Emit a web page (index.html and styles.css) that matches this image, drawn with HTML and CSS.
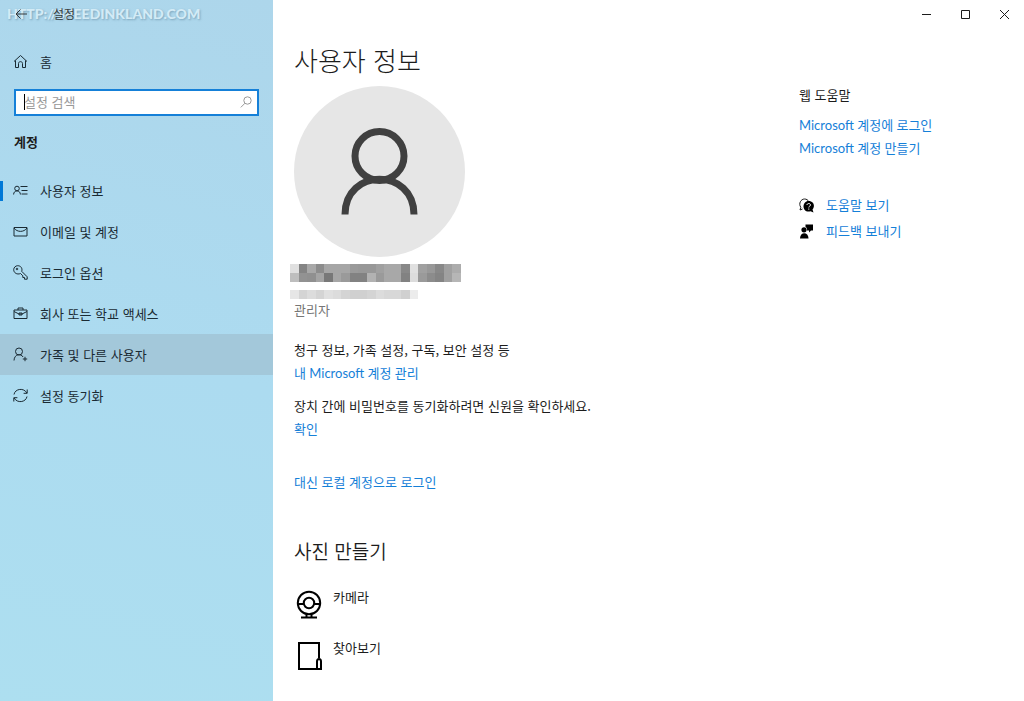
FILE: index.html
```
<!DOCTYPE html>
<html lang="ko">
<head>
  <meta charset="UTF-8">
  <title>설정</title>
  <link rel="stylesheet" href="styles.css">
</head>
<body>
  <aside class="sidebar">
    <header class="titlebar">
      <div class="watermark">HTTP://SPEEDINKLAND.COM</div>
      <button class="back" type="button" aria-label="뒤로">
        <svg width="12" height="12" viewBox="0 0 12 12"><path d="M12 6H1M5.500 1.500L1 6l4.500 4.500"/></svg>
      </button>
      <span class="app-name">설정</span>
    </header>
    <a class="nav-item home" href="#">
      <svg width="15" height="15" viewBox="0 0 15 15"><path d="M1 7.500L7.500 1.500 14 7.500M2.500 6.500v7h3V9.500c0-2.500 4-2.500 4 0v4h3v-7"/></svg>
      홈
    </a>
    <form class="search">
      <input type="text" id="search" placeholder="설정 검색" aria-label="설정 검색">
      <span class="caret"></span>
      <svg width="12" height="12" viewBox="0 0 12 12"><circle cx="7.500" cy="4.500" r="3.700"/><path d="M5 7.200L.8 11.400"/></svg>
    </form>
    <h2>계정</h2>
    <nav>
      <a class="nav-item current" href="#">
        <svg width="15" height="15" viewBox="0 0 15 15"><circle cx="4" cy="5.500" r="2.300"/><path d="M.6 11.500c0-4.800 6.800-4.800 6.800 0M7.500 3.500h7M8.500 7.500h6M8.500 11h6"/></svg>
        사용자 정보
      </a>
      <a class="nav-item" href="#">
        <svg width="15" height="15" viewBox="0 0 15 15"><path d="M1 3.500h13v8.500H1zM1 4c3 4.500 10 4.500 13 0"/></svg>
        이메일 및 계정
      </a>
      <a class="nav-item" href="#">
        <svg width="15" height="15" viewBox="0 0 15 15"><path d="M8.700 6.300l5.500 5.500v2.400h-2.700v-1.700H9.800v-1.700L7.500 8.500C4 10 .7 7.800.7 4.700.7 2.500 2.500.7 4.700.7c3.100 0 5 2.600 4 5.600z"/><circle cx="4" cy="4" r=".8"/></svg>
        로그인 옵션
      </a>
      <a class="nav-item" href="#">
        <svg width="15" height="15" viewBox="0 0 15 15"><path d="M1 4h13v8.500H1zM5 4V2h5v2M1 5.500l5 2.500h3l5-2.500M6 7h3v2H6z"/></svg>
        회사 또는 학교 액세스
      </a>
      <a class="nav-item hover" href="#">
        <svg width="15" height="15" viewBox="0 0 15 15"><circle cx="6" cy="4.500" r="3.500"/><path d="M1 13.500C1.300 6.500 8.500 6.500 10 10M12 9.800v4.400M9.800 12h4.400"/></svg>
        가족 및 다른 사용자
      </a>
      <a class="nav-item" href="#">
        <svg width="15" height="15" viewBox="0 0 15 15"><path d="M1 6.500C2 .5 11 -.5 13.800 5M14.200 1.500V5.300h-3.600M14 8.500c-1 6-10 7-12.800 1.500M.8 13.500V9.700h3.600"/></svg>
        설정 동기화
      </a>
    </nav>
  </aside>

  <main class="content">
    <div class="window-buttons">
      <button type="button" aria-label="최소화"><svg width="11" height="11" viewBox="0 0 11 11"><path d="M1 5.500h9"/></svg></button>
      <button type="button" aria-label="최대화"><svg width="11" height="11" viewBox="0 0 11 11"><path d="M1.500 1.500h8v8h-8z"/></svg></button>
      <button type="button" aria-label="닫기"><svg width="11" height="11" viewBox="0 0 11 11"><path d="M1 1l9 9M10 1l-9 9"/></svg></button>
    </div>
    <div class="columns">
      <section class="info">
        <h1>사용자 정보</h1>
        <svg class="avatar" width="171" height="171" viewBox="0 0 171 171">
          <circle class="disc" cx="85.500" cy="85.500" r="85.500"/>
          <circle cx="85.500" cy="70" r="24.500"/>
          <path d="M51 128.500c0-47 69-47 69 0"/>
        </svg>
        <div class="mosaic" id="name"></div>
        <div class="mosaic mail" id="mail"></div>
        <p class="role">관리자</p>
        <div class="block">
          <p>청구 정보, 가족 설정, 구독, 보안 설정 등</p>
          <a class="ms-link" href="#">내 Microsoft 계정 관리</a>
        </div>
        <div class="block">
          <p>장치 간에 비밀번호를 동기화하려면 신원을 확인하세요.</p>
          <a href="#">확인</a>
        </div>
        <a class="local" href="#">대신 로컬 계정으로 로그인</a>
        <h3>사진 만들기</h3>
        <button class="source" type="button">
          <svg width="30" height="30" viewBox="0 0 30 30"><circle cx="15" cy="13" r="11.200"/><circle cx="15" cy="13" r="5.200"/><path d="M4 14h5.800M20.200 14H26M12.500 24v3.500M17.500 24v3.500M7 27.500h16"/></svg>
          카메라
        </button>
        <button class="source" type="button">
          <svg width="30" height="30" viewBox="0 0 30 30"><path d="M25 17V2H5v26h18M23 28V20.500c0-3.500 4-3.500 4 0V28z"/></svg>
          찾아보기
        </button>
      </section>
      <aside class="help">
        <h4>웹 도움말</h4>
        <a class="ms-link" href="#">Microsoft 계정에 로그인</a>
        <a class="ms-link" href="#">Microsoft 계정 만들기</a>
        <div class="support">
          <a href="#">
            <svg width="15" height="15" viewBox="0 0 15 15"><path d="M3.500 11l-2.500 1 .8-2.700C-.8 5.500 2 1 5.500 1c2 0 3.500 1 4.200 2.500"/><path class="solid" d="M9.500 3c6 0 6.500 6 4 8.500l1 3-3-1.200C7 14.500 4.500 11.500 4.500 8.500c0-3 2-5.500 5-5.500z"/><path class="mark" d="M8 7c0-2 3.500-2 3.500 0 0 1.200-1.700 1-1.700 2.500M9.800 10.500v1.200"/></svg>
            도움말 보기
          </a>
          <a href="#">
            <svg width="15" height="15" viewBox="0 0 15 15"><path class="solid" d="M6.500.5H14v6h-2l-2 2v-2H8c.5-2-.5-3-1.500-3.500z"/><circle class="solid" cx="5" cy="5.800" r="2.600"/><path class="solid" d="M1 14.500c0-7 8.500-7 8.500 0z"/></svg>
            피드백 보내기
          </a>
        </div>
      </aside>
    </div>
  </main>
  <script src="script.js"></script>
</body>
</html>
```
FILE: styles.css
```
* {
  box-sizing: border-box;
}
body {
  margin: 0;
  display: flex;
  min-height: 100vh;
  background: #fff;
  color: #1c1c1c;
  font: 13px/20px "Noto Sans CJK KR", sans-serif;
}
h1, h2, h3, h4, p {
  margin: 0;
  font-weight: 400;
}
a {
  color: #1580d8;
  text-decoration: none;
}
.ms-link {
  font-family: Lato, "Noto Sans CJK KR", sans-serif;
}
button {
  padding: 0;
  border: 0;
  background: none;
  color: inherit;
  font: inherit;
}
svg {
  display: block;
  flex: none;
  fill: none;
  stroke: #1c1c1c;
}

/* sidebar */
.sidebar {
  flex: none;
  width: 273px;
  background: linear-gradient(15deg, #addff0, #acdbf0 50%, #add6eb);
}
.titlebar {
  position: relative;
  display: flex;
  align-items: center;
  gap: 26px;
  height: 28px;
  padding-left: 15px;
  font-size: 12px;
}
.back,
.app-name {
  z-index: 1;
  opacity: 0.85;
}
.watermark {
  position: absolute;
  left: 7px;
  top: 4px;
  color: #d3ebf6;
  font: 900 14px/20px Lato, sans-serif;
  text-shadow: 1px 1px 2px rgba(80, 120, 145, 0.5);
}
.nav-item {
  display: flex;
  align-items: center;
  gap: 12px;
  height: 41px;
  padding-left: 13px;
  color: #1a2a33;
}
.nav-item svg {
  stroke: #1a2a33;
}
.home {
  margin-top: 13px;
}
.search {
  position: relative;
  margin: 7px 14px 16px;
}
.search input {
  display: block;
  width: 100%;
  height: 27px;
  padding: 0 30px 2px 8px;
  border: 2px solid #1580d8;
  border-radius: 0;
  outline: 0;
  background: #fff;
  font: inherit;
}
.search input::placeholder {
  color: #999;
  opacity: 1;
}
.search svg {
  position: absolute;
  right: 7px;
  top: 7px;
  stroke: #999;
}
.caret {
  position: absolute;
  left: 10px;
  top: 5px;
  width: 1px;
  height: 16px;
  background: #000;
}
h2 {
  margin: 0 14px 18px;
  font-size: 13px;
  font-weight: 700;
}
.current {
  background: linear-gradient(#0078d7, #0078d7) 0 50% / 3px 20px no-repeat;
}
.hover {
  background: #a3c8da;
}

/* content */
.content {
  flex: 1;
}
.window-buttons {
  display: flex;
  justify-content: flex-end;
}
.window-buttons button {
  display: flex;
  align-items: center;
  justify-content: center;
  width: 39px;
  height: 28px;
}
.columns {
  display: flex;
  justify-content: space-between;
  padding: 14px 20px 20px 21px;
}
h1 {
  margin-bottom: 8px;
  font-size: 26px;
  font-weight: 300;
  line-height: 36px;
}
.avatar {
  stroke: #404040;
  stroke-width: 7;
}
.disc {
  fill: #e6e6e6;
  stroke: none;
}
.mosaic {
  display: grid;
  grid-template-columns: repeat(20, 1fr);
  grid-auto-rows: 9px;
  width: 171px;
  margin: 7px 0 8px -4px;
}
.mail {
  margin-bottom: 1px;
}
.role {
  color: #767676;
}
.block {
  display: grid;
  justify-items: start;
  gap: 3px;
  margin-top: 13px;
}
.role + .block {
  margin-top: 20px;
}
.local {
  display: inline-block;
  margin: 33px 0 45px;
}
h3 {
  margin-bottom: 22px;
  font-size: 19px;
  font-weight: 350;
  line-height: 28px;
}
.source {
  display: flex;
  gap: 9px;
  height: 51px;
}
.source svg {
  margin-top: 3px;
  stroke-width: 2;
  stroke: #000;
}

/* help column */
.help {
  width: 205px;
  padding-top: 43px;
}
.help h4 {
  margin-bottom: 10px;
}
.help > a {
  display: block;
  margin-bottom: 3px;
}
.support {
  display: grid;
  gap: 6px;
  margin-top: 37px;
}
.support a {
  display: flex;
  align-items: center;
  gap: 12px;
}
.solid {
  fill: #000;
  stroke: none;
}
.mark {
  stroke: #fff;
}
```
FILE: script.js
```
// gray level of each cell, row after row
var nameCells = [
  224, 132, 168, 140, 166, 166, 166, 154, 152, 152, 160, 168, 168, 136, 224, 160, 152, 136, 160, 172,
  190, 146, 144, 164, 120, 166, 154, 130, 130, 178, 154, 168, 168, 130, 220, 154, 140, 132, 160, 182
];
var mailCells = [230, 212, 220, 212, 224, 220, 212, 208, 208, 212, 220, 216, 216, 208, 236];

function drawCells(id, cells) {
  var box = document.getElementById(id);
  for (var i = 0; i < cells.length; i++) {
    var cell = document.createElement("span");
    cell.style.backgroundColor = "rgb(" + cells[i] + "," + cells[i] + "," + cells[i] + ")";
    box.appendChild(cell);
  }
}

drawCells("name", nameCells);
drawCells("mail", mailCells);
```
